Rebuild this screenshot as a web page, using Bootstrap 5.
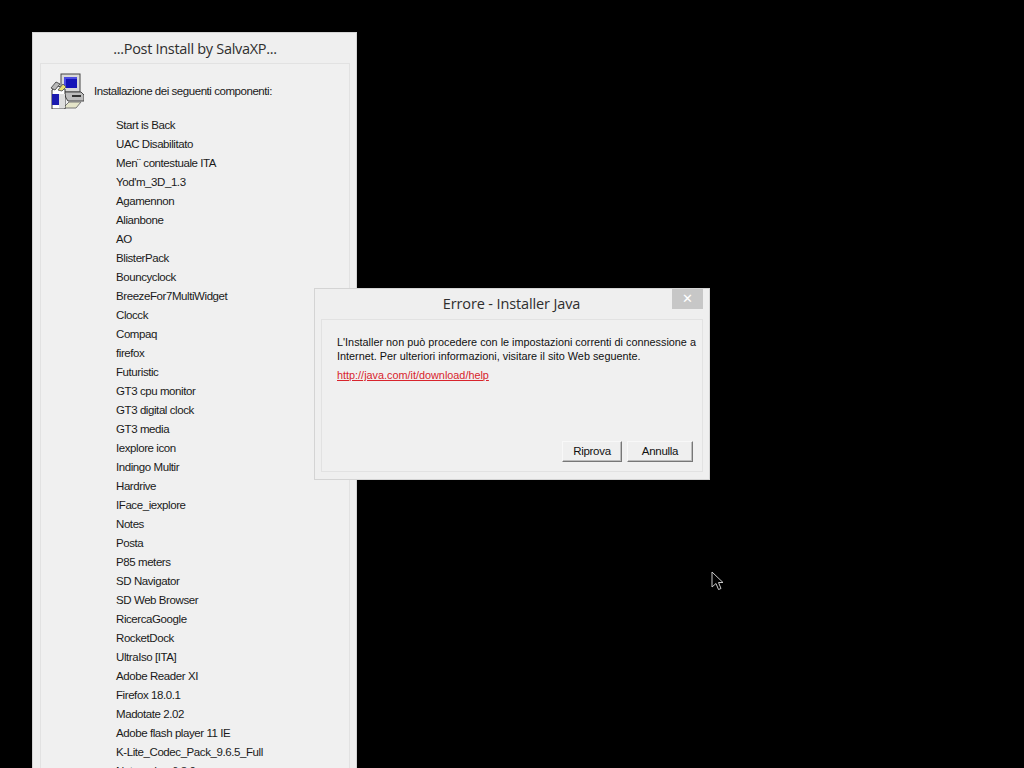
<!DOCTYPE html>
<html lang="it">
<head>
<meta charset="utf-8">
<title>Post Install</title>
<link href="https://cdn.jsdelivr.net/npm/bootstrap@5.3.0/dist/css/bootstrap.min.css" rel="stylesheet">
<style>
html,body{height:100%;margin:0;background:#000;overflow:hidden}
.desk{position:relative;width:1024px;height:768px;overflow:hidden;background:#000;font-family:"Liberation Sans",Arial,sans-serif;color:#1a1a1a}
.win{position:absolute;background:#efefef;border:1px solid #d4d4d4}
.win-a{left:32px;top:32px;width:325px;height:760px;padding:0 6px 0 7px}
.win-b{left:314px;top:288px;width:396px;height:192px;padding:0 6px 7px 6px}
.wtitle{font-family:"Open Sans","Noto Sans",sans-serif;font-size:14.5px;color:#2e2e2e;text-align:center}
.win-a .wtitle{height:30px;line-height:32px;letter-spacing:-.3px}
.win-b .wtitle{height:30px;line-height:30px;letter-spacing:-.13px;padding-right:1px}
.closer{position:absolute;right:6px;top:0;width:31px;height:20px;background:#c7c7c7;color:#fff;font-size:13px;line-height:19px;text-align:center}
.pane{background:#f0f0f0;border:1px solid #e2e2e2}
.win-a .pane{height:100%;padding:8px 0 0 9px}
.win-b .pane{height:153px;padding:15px 6px 0 15px}
.headline{height:38px;gap:10px;font-size:11.5px;letter-spacing:-.45px}
.headline span{padding-top:2px}
.comp{list-style:none;margin:6px 0 0 66px;padding:0;font-size:11.5px;line-height:19px;letter-spacing:-.42px;white-space:nowrap}
.msg{font-size:10.85px;line-height:14px;margin:0;white-space:nowrap;color:#111}
.lnk{display:block;margin-top:5px;font-size:10.85px;line-height:14px;color:#d8242c;text-decoration:underline}
.bbar{gap:5px;padding-right:3px;margin-top:59px}
.wbtn{width:60px;height:21px;padding:0 0 2px;border:1px solid;border-color:#f8f8f8 #777 #777 #f8f8f8;box-shadow:inset -1px -1px 0 #bdbdbd;background:#efefef;font-size:11.5px;letter-spacing:-.3px;line-height:16px;color:#111;border-radius:0}
.wbtn2{width:66px}
.cursor{position:absolute;left:711px;top:571px}
</style>
</head>
<body>
<div class="desk">
  <div class="win win-a">
    <div class="wtitle">...Post Install by SalvaXP...</div>
    <div class="pane">
      <div class="d-flex align-items-center headline">
        <svg width="34" height="36" viewBox="0 0 34 36" aria-hidden="true">
          <rect x="11" y="1" width="19" height="18" fill="#d8d8d8" stroke="#444"/>
          <rect x="14" y="4" width="13" height="11" fill="#1414b8"/>
          <path d="M14 4h13v2H16v9h-2z" fill="#4a4ae0"/>
          <path d="M14 19h17l3 3v6H18l-2-3z" fill="#bdbdbd" stroke="#444"/>
          <rect x="22" y="22" width="9" height="2" fill="#333"/>
          <path d="M19 29h12l-5 6H13z" fill="#e4e4c8" stroke="#777"/>
          <path d="M2 17l6-4 7 3v20H2z" fill="#fff" stroke="#333"/>
          <rect x="2" y="21" width="7" height="11" fill="#1c1cb0"/>
          <rect x="9" y="21" width="6" height="14" fill="#dedede"/>
          <path d="M1 15l5-6 4 2-5 6z" fill="#b9b9b9" stroke="#555"/>
          <path d="M8 17l5-6 3 3-4 4z" fill="#e8e070" stroke="#666"/>
        </svg>
        <span>Installazione dei seguenti componenti:</span>
      </div>
      <ul class="comp">
        <li>Start is Back</li><li>UAC Disabilitato</li><li>Men¨ contestuale ITA</li><li>Yod'm_3D_1.3</li><li>Agamennon</li><li>Alianbone</li><li>AO</li><li>BlisterPack</li><li>Bouncyclock</li><li>BreezeFor7MultiWidget</li><li>Clocck</li><li>Compaq</li><li>firefox</li><li>Futuristic</li><li>GT3 cpu monitor</li><li>GT3 digital clock</li><li>GT3 media</li><li>Iexplore icon</li><li>Indingo Multir</li><li>Hardrive</li><li>IFace_iexplore</li><li>Notes</li><li>Posta</li><li>P85 meters</li><li>SD Navigator</li><li>SD Web Browser</li><li>RicercaGoogle</li><li>RocketDock</li><li>UltraIso [ITA]</li><li>Adobe Reader XI</li><li>Firefox 18.0.1</li><li>Madotate 2.02</li><li>Adobe flash player 11 IE</li><li>K-Lite_Codec_Pack_9.6.5_Full</li><li>Notepad++ 6.3.0</li>
      </ul>
    </div>
  </div>
  <div class="win win-b">
    <div class="wtitle">Errore - Installer Java</div>
    <div class="closer">✕</div>
    <div class="pane">
      <p class="msg">L'Installer non può procedere con le impostazioni correnti di connessione a<br>Internet. Per ulteriori informazioni, visitare il sito Web seguente.</p>
      <a class="lnk" href="#">http://java.com/it/download/help</a>
      <div class="d-flex justify-content-end bbar">
        <button type="button" class="btn wbtn">Riprova</button>
        <button type="button" class="btn wbtn wbtn2">Annulla</button>
      </div>
    </div>
  </div>
  <svg class="cursor" width="13" height="20" viewBox="0 0 13 20" aria-hidden="true"><path d="M1 1v15l4-3.500 2.500 6 2.500-1-2.500-6H12z" fill="#000" stroke="#c8c8c8"/></svg>
</div>
<script src="https://cdn.jsdelivr.net/npm/bootstrap@5.3.0/dist/js/bootstrap.bundle.min.js"></script>
</body>
</html>
